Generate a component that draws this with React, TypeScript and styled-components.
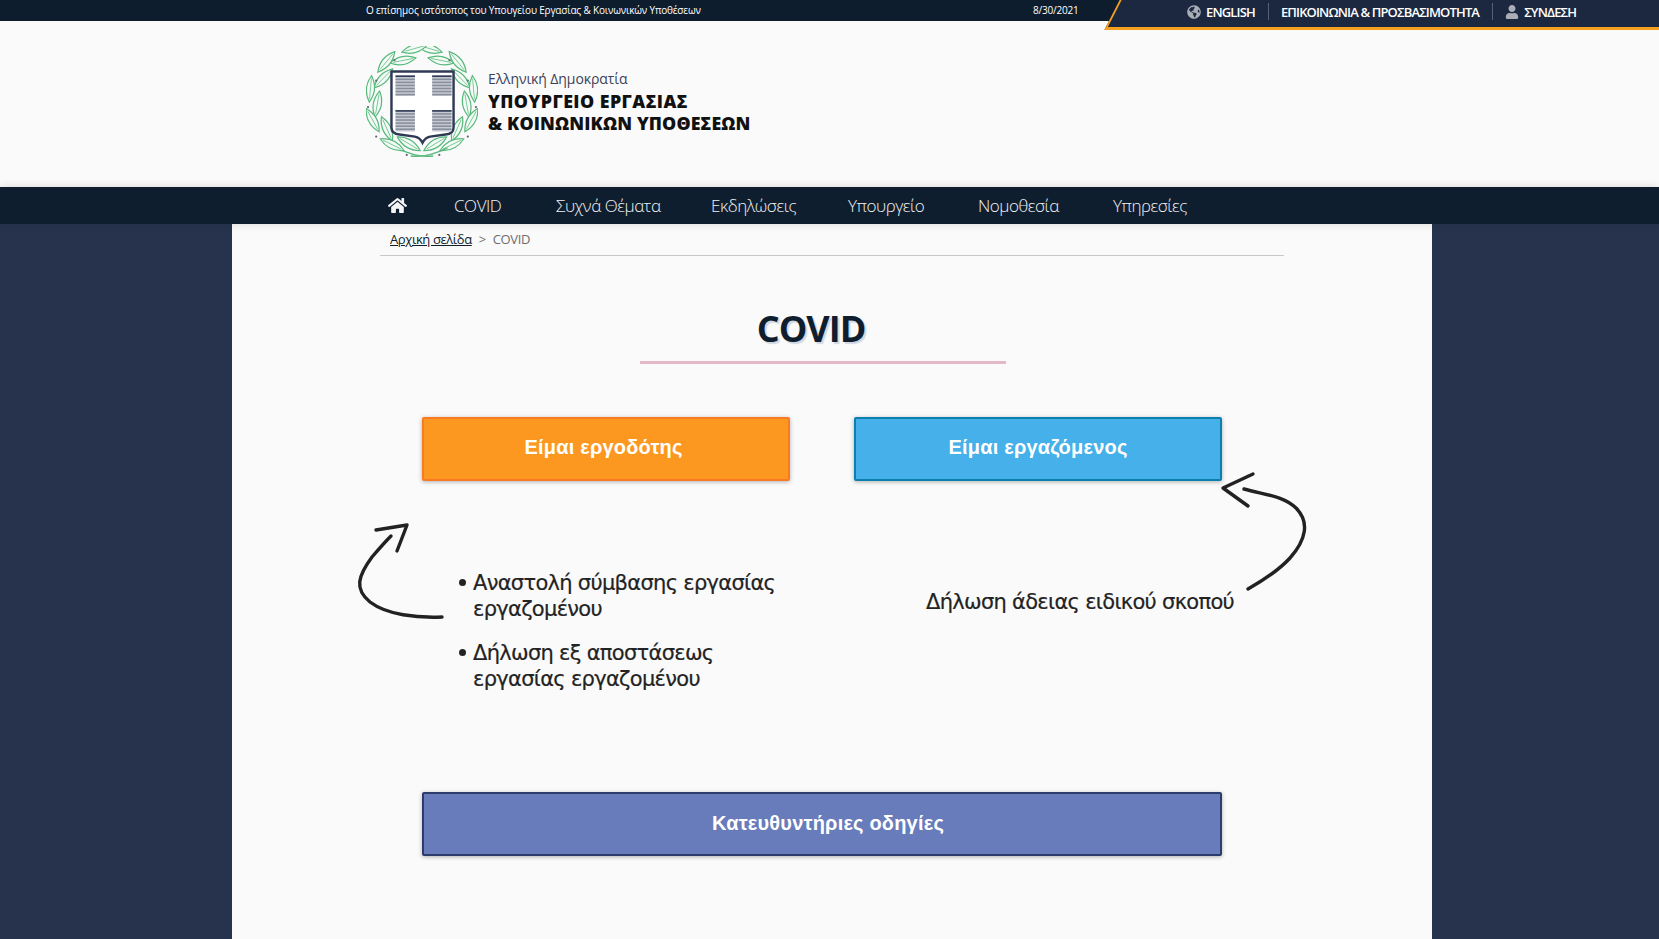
import React from 'react';
import styled, { createGlobalStyle } from 'styled-components';
import { FaGlobeAmericas, FaHome, FaUser } from 'react-icons/fa';

const GlobalStyle = createGlobalStyle`
  html, body { margin: 0; padding: 0; overflow-x: hidden; background: #27334d; }
  body { font-family: "Open Sans", "Noto Sans", sans-serif; }
  a { color: inherit; text-decoration: none; }
`;

const Page = styled.div`
  min-height: 939px;
  display: flex;
  flex-direction: column;
  overflow: hidden;
`;

const TopBar = styled.div`
  position: relative;
  z-index: 2;
  height: 21px;
  background: #0e1d2e;
  color: #fff;
  display: flex;
  align-items: center;
  padding: 0 0 2px 366px;
  box-sizing: border-box;
  font-size: 10px;
`;

const TopLine = styled.span`
  width: 667px;
  letter-spacing: -0.18px;
`;

const TopDate = styled.span`
  letter-spacing: -0.2px;
`;

const UtilityPanel = styled.div`
  position: absolute;
  top: 0;
  left: 1112px;
  right: 0;
  height: 30px;
  display: flex;
  align-items: flex-start;
  padding: 3px 0 0 75px;
  box-sizing: border-box;
  font-size: 13px;
  font-weight: 600;
  letter-spacing: -0.85px;
  &::before {
    content: "";
    position: absolute;
    inset: 0 -40px 0 0;
    background: #1b2840;
    border-left: 2px solid #f5a01f;
    border-bottom: 3px solid #f5a01f;
    transform: skewX(-27deg);
  }
`;

const UtilityItem = styled.a<{ $divided?: boolean }>`
  position: relative;
  display: flex;
  align-items: center;
  gap: 5px;
  height: 17px;
  padding-right: 13px;
  margin-right: 12px;
  white-space: nowrap;
  border-right: ${p => (p.$divided ? '1px solid #55607a' : 'none')};
  svg { color: #a9adb5; font-size: 14px; }
`;

const Masthead = styled.header`
  height: 166px;
  background: #fafafa;
  display: flex;
  align-items: center;
  padding-left: 366px;
  gap: 10px;
`;

const EmblemSvg = styled.svg`
  display: block;
  flex: none;
  width: 112px;
  height: 114px;
  margin-top: -2px;
  filter: blur(0.5px);
`;

const Ministry = styled.div`
  display: flex;
  flex-direction: column;
  color: #111;
  margin-top: -8px;
`;

const Republic = styled.span`
  font-size: 14px;
  line-height: 23px;
  color: #3b4258;
  letter-spacing: -0.1px;
`;

const MinistryName = styled.span<{ $track: number }>`
  font-family: "Open Sans", sans-serif;
  font-size: 17.8px;
  font-weight: 800;
  line-height: 22px;
  letter-spacing: ${p => p.$track}px;
  white-space: nowrap;
`;

const NavBar = styled.nav`
  position: relative;
  z-index: 1;
  height: 37px;
  background: #0f1e2f;
  display: flex;
  align-items: center;
  padding-left: 388px;
  color: #f2f2f2;
  font-size: 17px;
  font-weight: 300;
  letter-spacing: -0.45px;
  box-shadow: 0 0 8px rgba(0, 0, 0, 0.15);
`;

const HomeLink = styled.a`
  display: flex;
  width: 66px;
  font-size: 19px;
  color: #f4f4f4;
`;

const NavLink = styled.a<{ $width: number }>`
  width: ${p => p.$width}px;
  white-space: nowrap;
`;

const Sheet = styled.main`
  flex: 1;
  width: 1200px;
  margin-left: 232px;
  background: #fafafa;
  padding: 0 148px 0 148px;
  box-sizing: border-box;
`;

const Crumbs = styled.div`
  height: 32px;
  box-sizing: border-box;
  border-bottom: 1px solid #c8c8c8;
  padding: 6px 0 0 10px;
  font-size: 13px;
  line-height: 18px;
  letter-spacing: -0.4px;
  color: #6d6d6d;
  white-space: nowrap;
`;

const CrumbLink = styled.a`
  color: #0f1e2f;
  text-decoration: underline;
`;

const CrumbSep = styled.span`
  margin: 0 7px;
`;

const Heading = styled.div`
  width: 366px;
  margin: 49px 0 0 260px;
  height: 56px;
  border-bottom: 3px solid #e4b9c6;
  text-align: center;
`;

const HeadingText = styled.h1`
  margin: 0;
  margin-left: -24px;
  font-size: 36px;
  line-height: 48px;
  font-weight: 700;
  letter-spacing: -1px;
  color: #0f1e2f;
  text-shadow: 2px 2px 1px #cfd6e2;
`;

const Choices = styled.div`
  display: grid;
  grid-template-columns: 368px 368px;
  column-gap: 64px;
  margin: 53px 0 0 42px;
`;

const ActionButton = styled.a<{ $bg: string; $edge: string; $wide?: boolean; $nudge?: number }>`
  display: flex;
  align-items: center;
  justify-content: center;
  height: 64px;
  box-sizing: border-box;
  background: ${p => p.$bg};
  border: 2px solid ${p => p.$edge};
  border-radius: 2px;
  box-shadow: 0 1px 4px rgba(0, 0, 0, 0.3);
  color: #fff;
  font-family: "Liberation Sans", Arial, sans-serif;
  font-size: 20px;
  font-weight: 700;
  letter-spacing: 0.2px;
  white-space: nowrap;
  padding-bottom: 3px;
  padding-right: ${p => p.$nudge ?? 0}px;
  ${p => (p.$wide ? 'width: 800px; margin: 0 0 0 42px; padding-left: 12px; padding-bottom: 1px;' : '')}
`;

const Notes = styled.div`
  display: grid;
  grid-template-columns: 571px auto;
  margin: -13px 0 0 -25px;
  height: 324px;
  color: #232323;
  font-family: "DejaVu Sans", Verdana, sans-serif;
  font-size: 21px;
  line-height: 26px;
  letter-spacing: -0.7px;
  -webkit-text-stroke: 0.2px #232323;
`;

const NoteLeft = styled.div`
  display: flex;
  align-items: flex-start;
  padding-top: 54px;
`;

const NoteRight = styled.div`
  display: flex;
  align-items: flex-start;
`;

const ArrowSvg = styled.svg<{ $pull?: number }>`
  flex: none;
  display: block;
  margin-left: ${p => p.$pull ?? 0}px;
  fill: none;
  stroke: #222;
  stroke-width: 3.4;
  stroke-linecap: round;
  stroke-linejoin: round;
`;

const BulletList = styled.ul`
  margin: 48px 0 0 0;
  padding: 0 0 0 28px;
  width: 308px;
  list-style: none;
`;

const BulletItem = styled.li`
  margin-bottom: 18px;
  &::before {
    content: "";
    display: inline-block;
    width: 7px;
    height: 7px;
    border-radius: 50%;
    background: #232323;
    margin: 0 7px 0 -14px;
    vertical-align: 4px;
  }
`;

const SoloNote = styled.p`
  margin: 121px 0 0 0;
  white-space: nowrap;
`;

type Leaf = { x: number; y: number; a: number };

// half a wreath, mirrored for the other side
const wreathLeaves: Leaf[] = Array.from({ length: 10 }, (_, i) => {
  const deg = 8 + i * 17.2;
  const rad = (deg * Math.PI) / 180;
  const r = i % 2 === 0 ? 52 : 44;
  return {
    x: 65 + Math.sin(rad) * r,
    y: 62 - Math.cos(rad) * r,
    a: deg + (i % 2 === 0 ? 8 : -14),
  };
});

const wreathDots = [
  [38, 22], [92, 22], [20, 42], [110, 42], [12, 68], [118, 68], [20, 97], [110, 97], [50, 115], [82, 115],
];

function Emblem() {
  const stripes = [0, 1, 2, 3, 4, 5, 6];
  const blocks = [
    [39, 37, 20],
    [75, 37, 20],
    [39, 71, 21],
    [75, 71, 21],
  ];
  return (
    <EmblemSvg viewBox="10 8 110 112">
      {[1, -1].map(side => (
        <g key={side} transform={side === -1 ? 'translate(130 0) scale(-1 1)' : undefined}>
          {wreathLeaves.map((l, i) => (
            <g key={i} transform={`translate(${l.x} ${l.y}) rotate(${l.a})`} fill="#f4fbf6" stroke="#58b97c" strokeWidth="1.2">
              <path d="M-13 0 Q0 -8 13 0 Q0 8 -13 0Z" />
              <path d="M-10 0 H10" strokeWidth="0.7" />
            </g>
          ))}
          <path d="M40 108 Q60 118 76 116" fill="none" stroke="#58b97c" strokeWidth="1.4" />
        </g>
      ))}
      {wreathDots.map(([x, y], i) => (
        <circle key={i} cx={x} cy={y} r="1.1" fill="#5d6b70" />
      ))}
      <path d="M35 33 H96 V88 Q96 94 88 95 L73 97 Q68 98 65.500 103 Q63 98 58 97 L43 95 Q35 94 35 88Z" fill="#fff" stroke="#2f3a55" strokeWidth="2.4" />
      {blocks.map(([x, y, h], i) => (
        <g key={i}>
          <rect x={x} y={y} width="19" height={h} fill="#c6cad2" />
          {stripes.map(s => (
            <rect key={s} x={x} y={y + s * 3} width="19" height="1.500" fill="#868d9b" />
          ))}
          <rect x={x} y={y} width="19" height="1.500" fill="#333d57" />
        </g>
      ))}
    </EmblemSvg>
  );
}

const navItems = [
  { label: 'COVID', width: 102 },
  { label: 'Συχνά Θέματα', width: 155 },
  { label: 'Εκδηλώσεις', width: 137 },
  { label: 'Υπουργείο', width: 130 },
  { label: 'Νομοθεσία', width: 135 },
  { label: 'Υπηρεσίες', width: 90 },
];

export default function App() {
  return (
    <Page>
      <GlobalStyle />
      <TopBar>
        <TopLine>Ο επίσημος ιστότοπος του Υπουγείου Εργασίας &amp; Κοινωνικών Υποθέσεων</TopLine>
        <TopDate>8/30/2021</TopDate>
        <UtilityPanel>
          <UtilityItem $divided>
            <FaGlobeAmericas />
            ENGLISH
          </UtilityItem>
          <UtilityItem $divided>ΕΠΙΚΟΙΝΩΝΙΑ &amp; ΠΡΟΣΒΑΣΙΜΟΤΗΤΑ</UtilityItem>
          <UtilityItem>
            <FaUser />
            ΣΥΝΔΕΣΗ
          </UtilityItem>
        </UtilityPanel>
      </TopBar>
      <Masthead>
        <Emblem />
        <Ministry>
          <Republic>Ελληνική Δημοκρατία</Republic>
          <MinistryName $track={0.45}>ΥΠΟΥΡΓΕΙΟ ΕΡΓΑΣΙΑΣ</MinistryName>
          <MinistryName $track={0.13}>&amp; ΚΟΙΝΩΝΙΚΩΝ ΥΠΟΘΕΣΕΩΝ</MinistryName>
        </Ministry>
      </Masthead>
      <NavBar>
        <HomeLink>
          <FaHome />
        </HomeLink>
        {navItems.map(item => (
          <NavLink key={item.label} $width={item.width}>
            {item.label}
          </NavLink>
        ))}
      </NavBar>
      <Sheet>
        <Crumbs>
          <CrumbLink>Αρχική σελίδα</CrumbLink>
          <CrumbSep>&gt;</CrumbSep>
          COVID
        </Crumbs>
        <Heading>
          <HeadingText>COVID</HeadingText>
        </Heading>
        <Choices>
          <ActionButton $bg="#fc981f" $edge="#f97a22" $nudge={5}>Είμαι εργοδότης</ActionButton>
          <ActionButton $bg="#45b0e9" $edge="#0c7fae">Είμαι εργαζόμενος</ActionButton>
        </Choices>
        <Notes>
          <NoteLeft>
            <ArrowSvg width="90" height="100" viewBox="0 0 90 100">
              <path d="M87 95 C62 96 32 93 15 80 C-1 67 3 54 17 35 C23 28 29 21 36 14" />
              <path d="M21 8 L52 3 L42 29" />
            </ArrowSvg>
            <BulletList>
              <BulletItem>Αναστολή σύμβασης εργασίας εργαζομένου</BulletItem>
              <BulletItem>Δήλωση εξ αποστάσεως εργασίας εργαζομένου</BulletItem>
            </BulletList>
          </NoteLeft>
          <NoteRight>
            <SoloNote>Δήλωση άδειας ειδικού σκοπού</SoloNote>
            <ArrowSvg $pull={-16} width="92" height="126" viewBox="0 0 92 126">
              <path d="M26 21 C48 27 66 28 78 40 C92 54 88 72 72 90 C60 103 46 112 30 121" />
              <path d="M35 6 L5 20 L30 38" />
            </ArrowSvg>
          </NoteRight>
        </Notes>
        <ActionButton $bg="#687bba" $edge="#2c3b6c" $wide>Κατευθυντήριες οδηγίες</ActionButton>
      </Sheet>
    </Page>
  );
}
